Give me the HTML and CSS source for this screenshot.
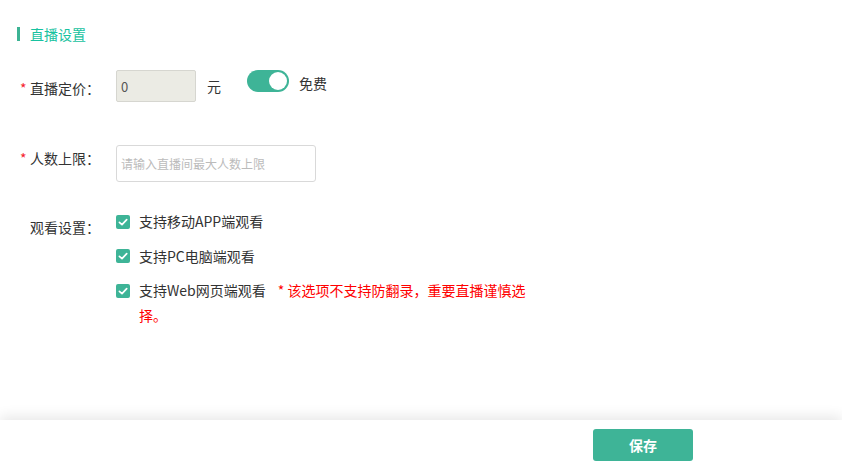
FILE: index.html
```
<!DOCTYPE html>
<html lang="zh-CN">
<head>
<meta charset="utf-8">
<title>直播设置</title>
<link rel="stylesheet" href="styles.css">
</head>
<body>
<div class="page">
  <main class="main">
    <h2 class="section-title">直播设置</h2>

    <div class="form-row row-price">
      <label class="form-label label-price"><span class="req">*</span>直播定价：</label>
      <div class="price-controls">
        <input class="input input-price" type="text" value="0">
        <span class="unit">元</span>
        <span class="switch"><span class="knob"></span></span>
        <span class="switch-text">免费</span>
      </div>
    </div>

    <div class="form-row row-limit">
      <label class="form-label label-limit"><span class="req">*</span>人数上限：</label>
      <input class="input input-limit" type="text" placeholder="请输入直播间最大人数上限">
    </div>

    <div class="form-row row-watch">
      <label class="form-label label-watch"><span class="req req-empty"></span>观看设置：</label>
      <div class="options">
        <div class="option">
          <span class="checkbox"><svg viewBox="0 0 14 14" width="14" height="14"><polyline points="3.4,7.3 6,9.7 10.7,4.6" fill="none" stroke="#fff" stroke-width="1.7" stroke-linecap="round" stroke-linejoin="round"/></svg></span>
          <span class="option-text">支持移动APP端观看</span>
        </div>
        <div class="option">
          <span class="checkbox"><svg viewBox="0 0 14 14" width="14" height="14"><polyline points="3.4,7.3 6,9.7 10.7,4.6" fill="none" stroke="#fff" stroke-width="1.7" stroke-linecap="round" stroke-linejoin="round"/></svg></span>
          <span class="option-text">支持PC电脑端观看</span>
        </div>
        <div class="option">
          <span class="checkbox"><svg viewBox="0 0 14 14" width="14" height="14"><polyline points="3.4,7.3 6,9.7 10.7,4.6" fill="none" stroke="#fff" stroke-width="1.7" stroke-linecap="round" stroke-linejoin="round"/></svg></span>
          <span class="option-text">支持Web网页端观看<span class="warn">* 该选项不支持防翻录，重要直播谨慎选择。</span></span>
        </div>
      </div>
    </div>
  </main>
  <footer class="footer">
    <button class="btn-save" type="button">保存</button>
  </footer>
</div>
</body>
</html>
```

FILE: styles.css
```
html, body {
  margin: 0;
  padding: 0;
  background: #fff;
}
body {
  font-family: "Noto Sans CJK SC", "Noto Sans", sans-serif;
  color: #333;
  font-size: 14px;
}
.page {
  height: 465px;
  display: flex;
  flex-direction: column;
}
.main {
  flex: 1;
  padding-top: 27px;
}
.section-title {
  margin: 0 0 29px 17px;
  padding-left: 10px;
  border-left: 3px solid #3cb394;
  font-size: 14px;
  line-height: 14px;
  height: 14px;
  font-weight: normal;
  color: #17c2a0;
}
.form-row {
  display: flex;
  align-items: flex-start;
}
.form-label {
  width: 96px;
  flex: none;
  padding-left: 20px;
  line-height: 20px;
  font-size: 14px;
  color: #333;
  white-space: nowrap;
}
.req {
  display: inline-block;
  width: 10px;
  color: #f5222d;
}
.label-price { padding-top: 8px; }
.label-limit { padding-top: 3px; }
.label-watch { padding-top: 8px; }

.row-limit { margin-top: 43px; }
.row-watch { margin-top: 27px; }

.input {
  box-sizing: border-box;
  font-family: inherit;
  outline: none;
  margin: 0;
}
.price-controls {
  display: flex;
  align-items: flex-start;
}
.input-price {
  width: 80px;
  height: 32px;
  background: #ebebe4;
  border: 1px solid #d6d6d0;
  border-radius: 2px;
  padding: 0 4px;
  font-size: 13px;
  color: #555;
}
.unit {
  margin-left: 11px;
  line-height: 32px;
  font-size: 14px;
}
.switch {
  margin-left: 26px;
  width: 42px;
  height: 22px;
  box-sizing: border-box;
  border-radius: 11px;
  background: #3eb497;
  display: flex;
  justify-content: flex-end;
  align-items: center;
  padding: 2px;
}
.knob {
  width: 18px;
  height: 18px;
  border-radius: 50%;
  background: #fff;
}
.switch-text {
  margin-left: 10px;
  line-height: 20px;
  padding-top: 3px;
  font-size: 14px;
}
.input-limit {
  width: 200px;
  height: 37px;
  border: 1px solid #d9d9d9;
  border-radius: 3px;
  padding: 0 4px;
  font-size: 12px;
  color: #333;
}
.input-limit::placeholder {
  color: #bbb;
}
.options {
  width: 415px;
}
.option {
  display: flex;
  align-items: flex-start;
  line-height: 25px;
  margin-bottom: 9.5px;
}
.checkbox {
  flex: none;
  width: 14px;
  height: 14px;
  margin-top: 5.5px;
  border-radius: 2px;
  background: #3eb497;
  display: flex;
}
.option-text {
  margin-left: 9px;
  font-size: 14px;
  color: #333;
}
.warn {
  color: #f00;
  margin-left: 12px;
}
.footer {
  height: 45px;
  flex: none;
  background: #fff;
  box-shadow: 0 -4px 12px rgba(0, 0, 0, 0.09);
  display: flex;
  justify-content: flex-end;
  align-items: flex-start;
  padding-right: 149px;
  position: relative;
}
.btn-save {
  margin-top: 9px;
  width: 100px;
  height: 32px;
  border: none;
  border-radius: 3px;
  background: #3eb497;
  color: #fff;
  font-family: inherit;
  font-size: 14px;
  font-weight: bold;
  cursor: pointer;
}
```
